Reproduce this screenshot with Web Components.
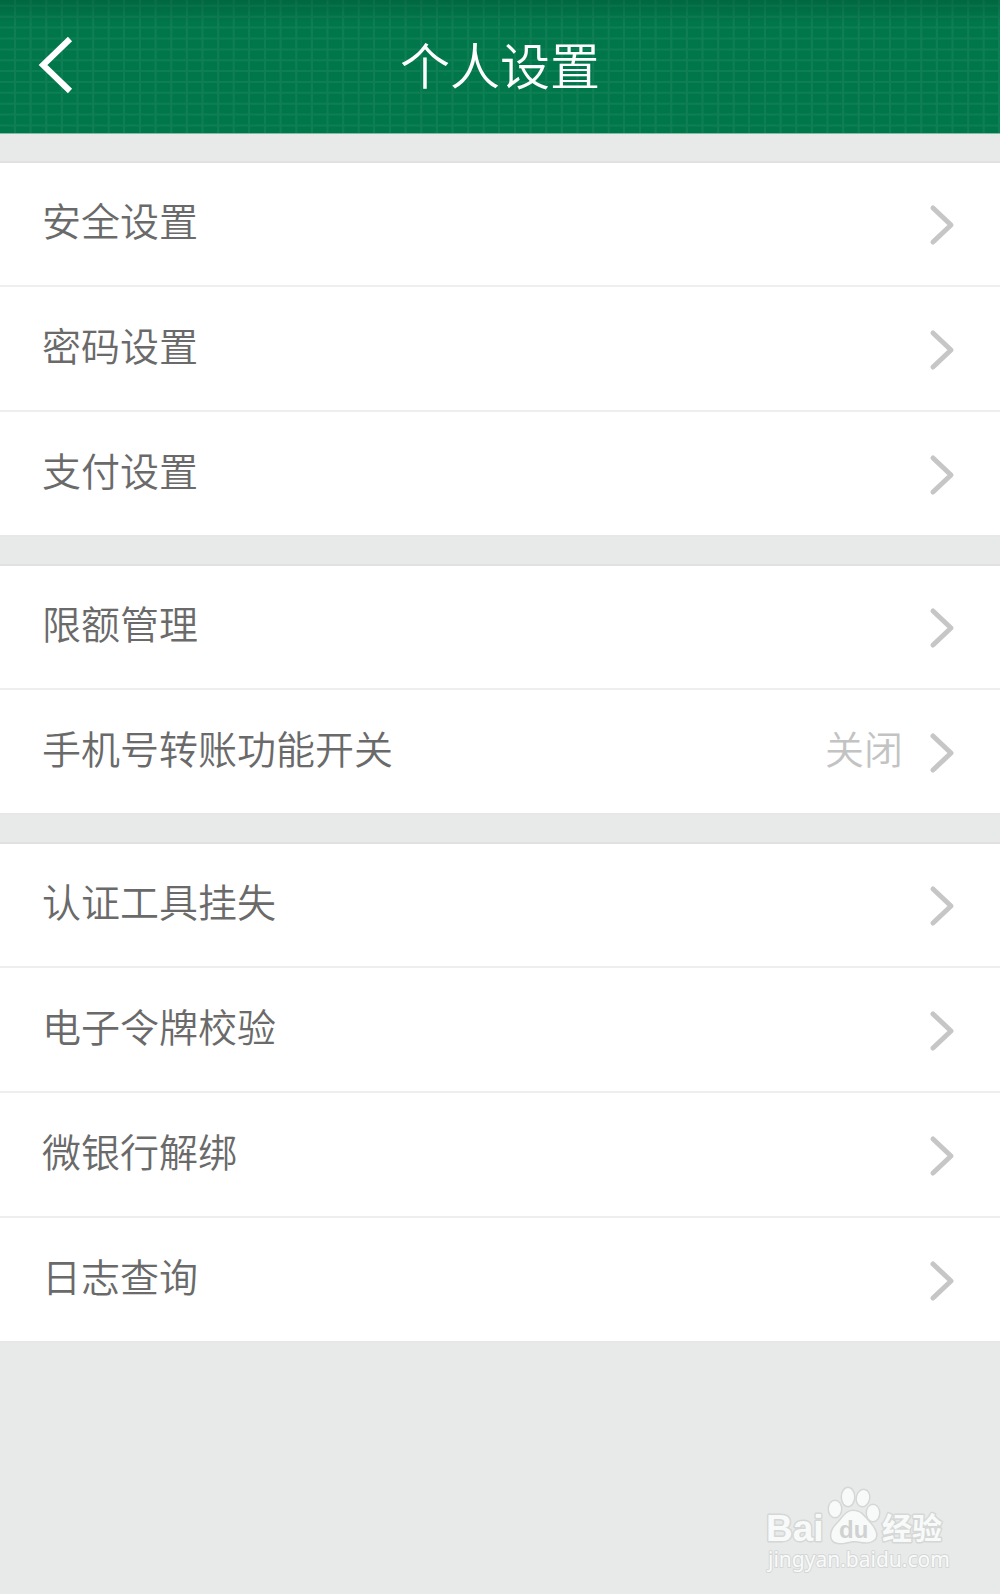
<!DOCTYPE html>
<html lang="zh-CN">
<head>
<meta charset="utf-8">
<meta name="viewport" content="width=device-width, initial-scale=1">
<title>个人设置</title>
<style>
  body { margin: 0; background: #e8eae9; color: #6a6a6a; font-family: "Noto Sans CJK SC", sans-serif; font-weight: 350; }
</style>
</head>
<body>
<settings-page>
  <app-header slot="header">个人设置</app-header>
  <setting-group>
    <setting-row>安全设置</setting-row>
    <setting-row>密码设置</setting-row>
    <setting-row>支付设置</setting-row>
  </setting-group>
  <setting-group>
    <setting-row>限额管理</setting-row>
    <setting-row>手机号转账功能开关<span slot="value">关闭</span></setting-row>
  </setting-group>
  <setting-group>
    <setting-row>认证工具挂失</setting-row>
    <setting-row>电子令牌校验</setting-row>
    <setting-row>微银行解绑</setting-row>
    <setting-row>日志查询</setting-row>
  </setting-group>
  <site-mark slot="footer"></site-mark>
</settings-page>

<template id="settings-page">
  <style>
    :host { display: flex; flex-direction: column; min-height: 100vh; }
    main { flex: 1; display: flex; flex-direction: column; gap: 27px; padding-top: 27px; }
    footer { display: flex; justify-content: flex-end; padding: 0 48px 18px; }
  </style>
  <slot name="header"></slot>
  <main><slot></slot></main>
  <footer><slot name="footer"></slot></footer>
</template>

<template id="app-header">
  <style>
    :host { display: block; color: #fff; }
    header { display: grid; grid-template-columns: 120px 1fr 120px; align-items: center; height: 133px; border-bottom: 1px solid #7fbca2; background: #00774a; }
    .grid { grid-area: 1 / 1 / 2 / 4; width: 100%; height: 133px; display: block; }
    button { grid-area: 1 / 1; display: flex; align-items: center; height: 100%; margin: 0; padding: 0 0 4px 36px; border: 0; background: none; color: inherit; cursor: pointer; }
    button svg { display: block; }
    h1 { grid-area: 1 / 2; margin: 0; padding-bottom: 8px; font-size: 50px; line-height: 72px; font-weight: inherit; text-align: center; }
  </style>
  <header>
    <svg class="grid" aria-hidden="true">
      <defs>
        <pattern id="mesh" width="125" height="87" patternUnits="userSpaceOnUse">
          <path d="M15 0V87M30.6 0V87M46.2 0V87M61.9 0V87M77.5 0V87M93.1 0V87M108.7 0V87M124 0V87M0 5.8H125M0 16.7H125M0 27.6H125M0 38.5H125M0 49.4H125M0 60.2H125M0 71H125M0 81.9H125" stroke="#0f7e54" stroke-width="2"/>
        </pattern>
        <linearGradient id="shade" x2="0" y2="1"><stop stop-color="#004d2f" stop-opacity=".35"/><stop offset=".18" stop-color="#004d2f" stop-opacity="0"/></linearGradient>
      </defs>
      <rect width="100%" height="100%" fill="url(#mesh)"/>
      <rect width="100%" height="100%" fill="url(#shade)"/>
    </svg>
    <button type="button" aria-label="返回">
      <svg width="38" height="60" viewBox="0 0 38 60" fill="none" stroke="currentColor" stroke-width="6"><path d="M34 4 7 30 34 56"/></svg>
    </button>
    <h1><slot></slot></h1>
  </header>
</template>

<template id="setting-group">
  <style>
    :host { display: block; background: #fff; border-top: 1px solid #e0e1e0; box-shadow: inset 0 1px #e0e0e0; }
  </style>
  <slot></slot>
</template>

<template id="setting-row">
  <style>
    :host { display: block; border-bottom: 2px solid #eee; }
    :host(:last-child) { border-bottom-color: #e6e7e6; }
    a { display: flex; align-items: center; gap: 26px; height: 123px; padding: 0 45px 0 42px; color: inherit; text-decoration: none; font-size: 39px; line-height: 56px; }
    .label, .value { padding-bottom: 10px; }
    .label { flex: 1; }
    .value { color: #c3c3c3; }
    svg { flex: none; display: block; padding-top: 2px; }
  </style>
  <a href="#">
    <span class="label"><slot></slot></span>
    <span class="value"><slot name="value"></slot></span>
    <svg width="26" height="42" viewBox="0 0 26 42" fill="none" stroke="#c6c6c6" stroke-width="5" stroke-linecap="round" stroke-linejoin="round" aria-hidden="true"><path d="M4 4 22 21 4 38"/></svg>
  </a>
</template>

<template id="site-mark">
  <style>
    :host { display: block; }
    svg { display: block; }
    text { font-family: "Liberation Sans", sans-serif; }
  </style>
  <svg width="190" height="92" viewBox="762 1484 190 92" fill="#f8fafa" stroke="#d5d7d6" stroke-width="3" paint-order="stroke" stroke-linejoin="round">
    <ellipse cx="835" cy="1509" rx="6" ry="8"/>
    <ellipse cx="848" cy="1497" rx="6" ry="9"/>
    <ellipse cx="863" cy="1498" rx="6" ry="8" transform="rotate(12 863 1498)"/>
    <ellipse cx="873" cy="1513" rx="6" ry="8"/>
    <path d="M853 1511C846 1511 843 1518 837 1524C829 1532 829 1543 840 1543C847 1543 849 1541 855 1541C861 1541 866 1544 872 1541C880 1537 875 1528 868 1521C863 1515 860 1511 853 1511Z"/>
    <text x="766" y="1541" font-size="37" font-weight="700">Bai</text>
    <text x="839" y="1538" font-size="24" font-weight="700" fill="#d0d2d1" stroke="none">du</text>
    <text x="882" y="1539" font-size="30" font-weight="700" style="font-family:'Noto Sans CJK SC',sans-serif">经验</text>
    <text x="768" y="1567" font-size="21" font-weight="400" stroke-width="2" style="font-family:'Noto Sans',sans-serif">jingyan.baidu.com</text>
  </svg>
</template>

<script>
  for (const name of ["settings-page", "app-header", "setting-group", "setting-row", "site-mark"]) {
    customElements.define(name, class extends HTMLElement {
      constructor() {
        super();
        this.attachShadow({ mode: "open" }).append(document.getElementById(name).content.cloneNode(true));
      }
    });
  }
</script>
</body>
</html>
